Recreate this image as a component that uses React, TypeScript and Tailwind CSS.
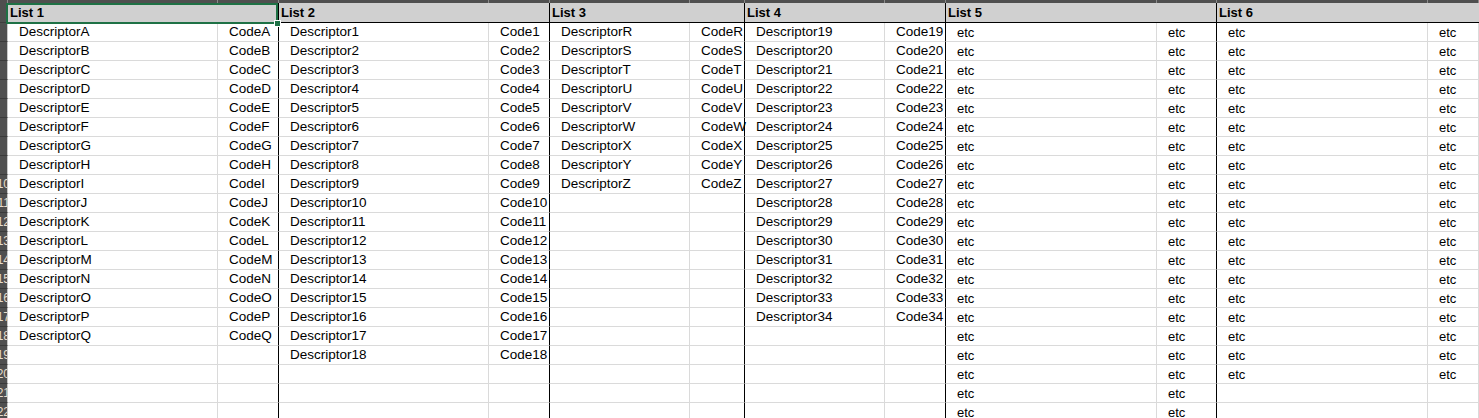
import React from 'react'

type List = { title: string; rows: [string, string][] }

const letters = (from: string, to: string) => {
  const out: string[] = []
  for (let c = from.charCodeAt(0); c <= to.charCodeAt(0); c++) out.push(String.fromCharCode(c))
  return out
}
const nums = (from: number, to: number) => Array.from({ length: to - from + 1 }, (_, i) => String(from + i))

const lists: List[] = [
  { title: 'List 1', rows: letters('A', 'Q').map((l) => [`Descriptor${l}`, `Code${l}`]) },
  { title: 'List 2', rows: nums(1, 18).map((n) => [`Descriptor${n}`, `Code${n}`]) },
  { title: 'List 3', rows: letters('R', 'Z').map((l) => [`Descriptor${l}`, `Code${l}`]) },
  { title: 'List 4', rows: nums(19, 34).map((n) => [`Descriptor${n}`, `Code${n}`]) },
  { title: 'List 5', rows: Array.from({ length: 21 }, () => ['etc', 'etc']) },
  { title: 'List 6', rows: Array.from({ length: 19 }, () => ['etc', 'etc']) },
]

const ROWS = 21
const cols =
  'grid grid-cols-[8px_210px_61px_210px_61px_140px_55px_140px_61px_211px_60px_211px_1fr]'

const cellText = (value: string) =>
  value === 'etc'
    ? "font-['Liberation_Sans',Arial,sans-serif] text-[13px]"
    : "font-['Liberation_Sans',Arial,sans-serif] text-[13.5px]"

export default function App() {
  return (
    <div className="h-[418px] w-[1479px] overflow-hidden bg-white text-black">
      {/* column heading strip, mostly scrolled out of view */}
      <div className={`${cols} h-[3px]`}>
        {Array.from({ length: 13 }, (_, i) => (
          <div key={i} className="h-[3px] border-r border-[#8a8a8a] bg-[#4f4f4f]" />
        ))}
      </div>

      {/* header row */}
      <div className={`${cols} h-[20px]`}>
        <div className="border-r border-b border-[#3e3e3e] bg-[#4f4f4f]" />
        {lists.map((list, i) => (
          <div
            key={list.title}
            className={`relative col-span-2 flex items-center border-b border-black bg-[#d0d0d0] pl-[2px] ${
              i === lists.length - 1 ? 'border-r-0' : 'border-r border-r-black'
            }`}
          >
            <span className="font-['Liberation_Sans',Arial,sans-serif] text-[13px] font-bold leading-none">
              {list.title}
            </span>
            {i === 0 && (
              <div className="pointer-events-none absolute -left-[2px] top-0 z-10 h-[21px] w-[272px] border-2 border-[#1e7145]">
                <div className="absolute -right-[4px] -bottom-[4px] h-[5px] w-[5px] bg-[#1e7145] ring-1 ring-white" />
              </div>
            )}
          </div>
        ))}
      </div>

      {/* data rows */}
      {Array.from({ length: ROWS }, (_, r) => (
        <div key={r} className={`${cols} h-[19px]`}>
          <div className="flex items-center justify-end overflow-hidden border-r border-r-[#c8c8c8] border-b border-b-[#3a3a3a] bg-[#4f4f4f]">
            {r + 2 >= 10 && (
              <span className="-mr-[3px] font-['Liberation_Sans',Arial,sans-serif] text-[12px] leading-none text-[#e6dccc]">
                {r + 2}
              </span>
            )}
          </div>
          {lists.map((list, i) => {
            const row = list.rows[r]
            return (
              <React.Fragment key={list.title}>
                <div className="flex items-center overflow-hidden whitespace-nowrap border-r border-b border-[#dadada] pl-[11px]">
                  {row && <span className={`${cellText(row[0])} leading-none`}>{row[0]}</span>}
                </div>
                <div
                  className={`flex items-center whitespace-nowrap border-b border-b-[#dadada] pl-[11px] ${
                    i === lists.length - 1 ? 'border-r border-r-[#dadada]' : 'border-r border-r-black'
                  }`}
                >
                  {row && <span className={`${cellText(row[1])} leading-none`}>{row[1]}</span>}
                </div>
              </React.Fragment>
            )
          })}
        </div>
      ))}
    </div>
  )
}
